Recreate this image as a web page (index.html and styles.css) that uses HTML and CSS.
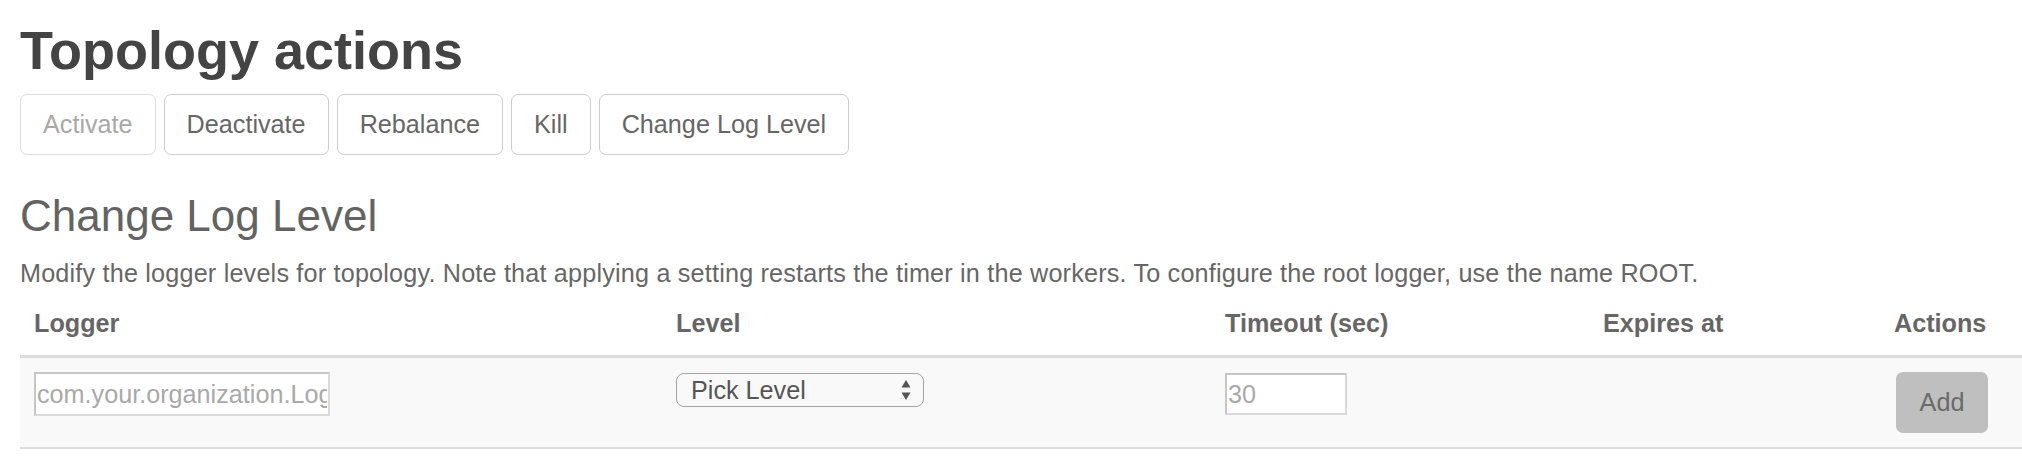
FILE: index.html
```html
<!DOCTYPE html>
<html lang="en">
<head>
<meta charset="utf-8">
<title>Topology actions</title>
<link rel="stylesheet" href="styles.css">
</head>
<body>
<div class="page">
  <h2 class="title">Topology actions</h2>
  <div class="actions">
    <button class="btn is-disabled" type="button">Activate</button>
    <button class="btn" type="button">Deactivate</button>
    <button class="btn" type="button">Rebalance</button>
    <button class="btn" type="button">Kill</button>
    <button class="btn" type="button">Change Log Level</button>
  </div>
  <h3 class="subtitle">Change Log Level</h3>
  <p class="desc">Modify the logger levels for topology. Note that applying a setting restarts the timer in the workers. To configure the root logger, use the name ROOT.</p>
  <table class="log-table">
    <colgroup>
      <col class="c-logger">
      <col class="c-level">
      <col class="c-timeout">
      <col class="c-expires">
      <col class="c-actions">
    </colgroup>
    <thead>
      <tr>
        <th>Logger</th>
        <th>Level</th>
        <th>Timeout (sec)</th>
        <th>Expires at</th>
        <th>Actions</th>
      </tr>
    </thead>
    <tbody>
      <tr>
        <td><input class="field field-logger" type="text" placeholder="com.your.organization.LoggerName"></td>
        <td>
          <div class="select">
            <span class="select-text">Pick Level</span>
            <svg class="select-arrows" width="10" height="22" viewBox="0 0 10 22"><path d="M5 1 L9.5 8.5 L0.5 8.5 Z" fill="#555"/><path d="M0.5 13.5 L9.5 13.5 L5 21 Z" fill="#555"/></svg>
          </div>
        </td>
        <td><input class="field field-timeout" type="text" placeholder="30"></td>
        <td></td>
        <td><button class="btn-add" type="button">Add</button></td>
      </tr>
    </tbody>
  </table>
</div>
</body>
</html>
```

FILE: styles.css
```css
html, body {
  margin: 0;
  padding: 0;
  background: #fff;
  overflow: hidden;
}

body {
  font-family: "Liberation Sans", Arial, Helvetica, sans-serif;
  font-size: 25.2px;
  line-height: 35px;
  color: #666;
}

.page {
  padding: 0 0 0 20px;
}

.title {
  margin: 21px 0 0;
  font-size: 54px;
  line-height: 58px;
  font-weight: bold;
  color: #444;
}

.actions {
  display: flex;
  gap: 8px;
  margin-top: 15px;
}

.btn {
  height: 61px;
  padding: 0 22px;
  border: 1.5px solid #ccc;
  border-radius: 7px;
  background: #fff;
  font-family: inherit;
  font-size: 25.2px;
  color: #666;
}

.btn.is-disabled {
  color: #a8a8a8;
  border-color: #dcdcdc;
}

.subtitle {
  margin: 37px 0 0;
  font-size: 44px;
  line-height: 48px;
  font-weight: normal;
  color: #636363;
}

.desc {
  margin: 16px 0 0;
  color: #666;
  letter-spacing: 0.19px;
}

.log-table {
  table-layout: fixed;
  width: 2030px;
  border-collapse: collapse;
  margin-top: 1px;
}

.c-logger { width: 642px; }
.c-level { width: 549px; }
.c-timeout { width: 378px; }
.c-expires { width: 291px; }
.c-actions { width: 170px; }

.log-table th {
  text-align: left;
  font-weight: bold;
  color: #666;
  padding: 14px;
  border-bottom: 3px solid #ddd;
}

.log-table td {
  background: #f9f9f9;
  padding: 14px;
  vertical-align: top;
  border-bottom: 2.5px solid #ddd;
}

.field {
  box-sizing: border-box;
  margin: 0;
  padding: 0 1px;
  font-family: inherit;
  font-size: 25.2px;
  color: #666;
  background: #fff;
  border: 2px solid;
  border-color: #c6c6c6 #dadada #dadada #c6c6c6;
  border-radius: 0;
  outline: none;
}

.field::placeholder {
  color: #a9a9a9;
}

.field-logger {
  width: 296px;
  height: 44px;
}

.field-timeout {
  width: 122px;
  height: 42px;
  margin-top: 1px;
}

.select {
  box-sizing: border-box;
  display: flex;
  align-items: center;
  justify-content: space-between;
  width: 248px;
  height: 34px;
  margin-top: 1px;
  padding: 0 12px 0 14px;
  border: 1.5px solid #a3a3a3;
  border-radius: 8px;
  background: #f9f9f9;
  color: #555;
}

.select-text {
  line-height: 30px;
}

.select-arrows {
  display: block;
}

.btn-add {
  width: 92px;
  height: 61px;
  margin-left: 2px;
  border: none;
  border-radius: 7px;
  background: #bfbfbf;
  font-family: inherit;
  font-size: 25.2px;
  color: #6a6a6a;
}
```
